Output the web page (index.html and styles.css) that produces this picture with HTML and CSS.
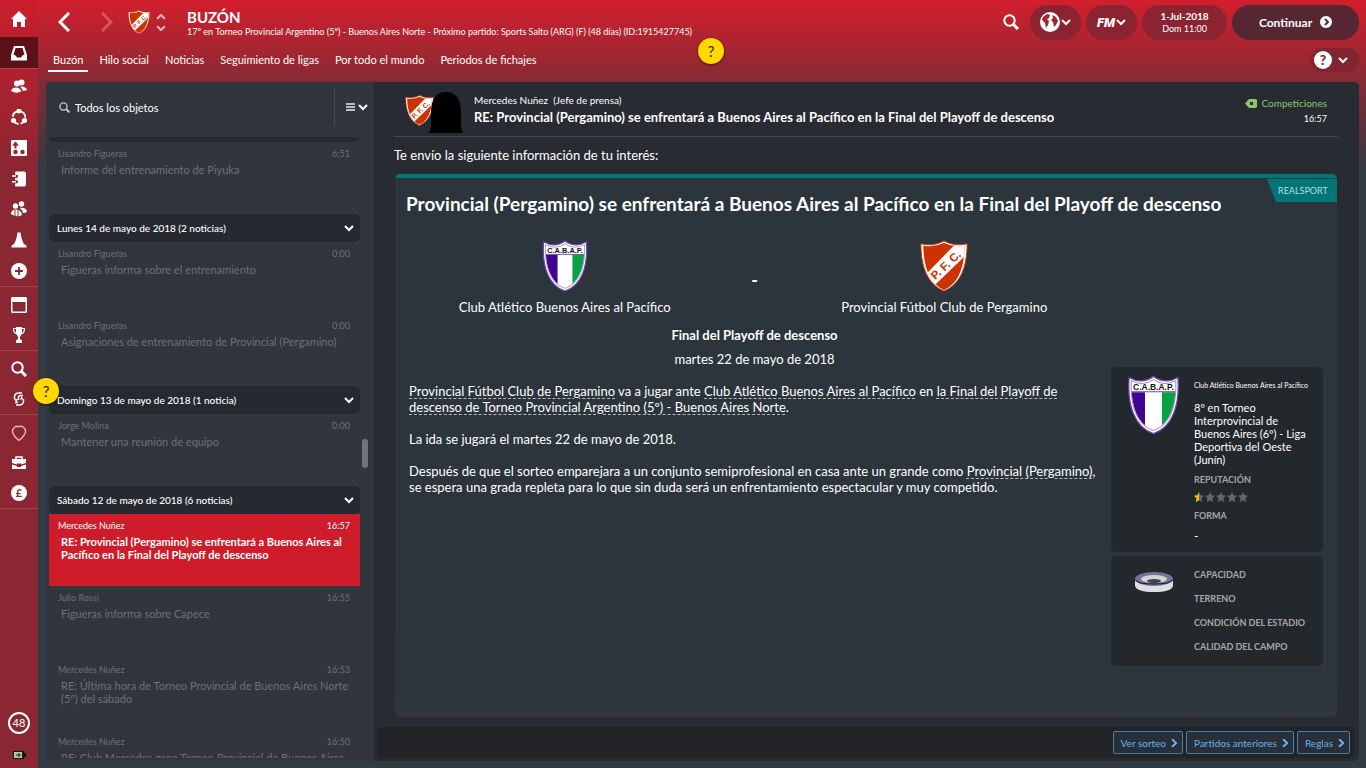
FILE: index.html
```html
<!DOCTYPE html>
<html lang="es">
  <head>
    <meta charset="UTF-8" />
    <meta name="viewport" content="width=device-width, initial-scale=1.0" />
    <title>Buzón</title>
    <link rel="stylesheet" href="styles.css">
  </head>
  <body>
    <!-- Shared crests and chevrons -->
    <svg class="defs" aria-hidden="true">
      <clipPath id="cabapClip"><path d="M4 6Q15 8 25 3Q35 8 46 6C46 29 41 45 25 52C9 45 4 29 4 6Z" /></clipPath>
      <clipPath id="pfcClip"><path d="M3.500 6Q15 8 25 3Q35 8 46.500 6C46 29 40 45 25 52C10 45 4 29 3.500 6Z" /></clipPath>
      <symbol id="cabap" viewBox="0 0 50 56">
        <path d="M2 2Q14 9 25 1Q36 9 48 2C50 28 43 49 25 55C7 49 0 28 2 2Z" fill="#fff" stroke="#6a45b5" stroke-width="1.200" />
        <g clip-path="url(#cabapClip)">
          <path d="M3 16H17V56H3Z" fill="#3f0591" />
          <path d="M33 16H48V56H33Z" fill="#06a243" />
          <path d="M3 15.500H47" stroke="#6a45b5" />
        </g>
        <path d="M4 5Q15 11 25 4Q35 11 46 5C47 28 41 47 25 52C9 47 3 28 4 5Z" fill="none" stroke="#8d70c8" stroke-width=".8" />
        <text x="25" y="14" text-anchor="middle" font-family="Liberation Sans" font-size="8" font-weight="bold" fill="#111">C.A.B.A.P.</text>
      </symbol>
      <symbol id="pfc" viewBox="0 0 50 54">
        <path d="M1 4Q14 7 25 1Q36 7 49 4C49 28 42 46 25 53C8 46 1 28 1 4Z" fill="#fff" stroke="#cf3a0c" stroke-width="1" />
        <g clip-path="url(#pfcClip)">
          <path d="M0 0H50V54H0Z" fill="#cd3301" />
          <path d="M0 42L42 -1L60 4L8 54Z" fill="#fff" />
        </g>
        <text x="27" y="30" text-anchor="middle" transform="rotate(-43 27 26)" font-family="Liberation Sans" font-size="12" font-weight="bold" fill="#cd3301">P. F. C.</text>
      </symbol>
      <symbol id="down" viewBox="0 0 10 8"><path d="M1 2L5 6L9 2" fill="none" stroke="currentColor" stroke-width="2" /></symbol>
      <symbol id="right" viewBox="0 0 6 8"><path d="M1 0L5 4L1 8" fill="none" stroke="currentColor" stroke-width="2" /></symbol>
      <symbol id="search" viewBox="0 0 16 16"><circle cx="6.500" cy="6.500" r="5.200" fill="none" stroke="currentColor" stroke-width="2" /><path d="M10 10L15 15" stroke="currentColor" stroke-width="3" /></symbol>
      <symbol id="star" viewBox="0 0 12 12"><path d="M6 0L7.800 4L12 4.500L9 7.500L9.700 12L6 9.800L2.300 12L3 7.500L0 4.500L4.200 4Z" fill="currentColor" /></symbol>
    </svg>

    <nav class="rail">
      <a class="home" href="#" aria-label="Inicio"><svg viewBox="0 0 16 16"><path d="M8 0L16 8H14V16H10V11H6V16H2V8H0Z" /></svg></a>
      <a class="active" href="#" aria-label="Buzón"><svg viewBox="0 0 16 16"><path fill-rule="evenodd" d="M3 1H13L16 10V15.500H0V10ZM4.500 3L2.500 10H4L6 12.500H10L12 10H13.500L11.500 3Z" /></svg></a>
      <div class="group first">
        <a href="#" aria-label="Plantilla"><svg viewBox="0 0 16 16"><circle cx="10.500" cy="4.500" r="3" /><circle cx="6" cy="5.500" r="3" /><path d="M0 13Q1 9.500 5 9.500Q9 9.500 10.500 13.500Q5 16 0 13ZM9 8.500Q15 8 16 12Q14 13 11.500 12.500Q11 10 9 8.500Z" /></svg></a>
        <a href="#" aria-label="Dinámica"><svg viewBox="0 0 16 16"><circle cx="8" cy="8.500" r="6.300" fill="none" stroke="#fff" stroke-width="1.800" stroke-dasharray="8 2" /><circle cx="8" cy="2" r="2.500" /><circle cx="2.500" cy="11.500" r="2.600" /><circle cx="13.500" cy="11.500" r="2.600" /></svg></a>
        <a href="#" aria-label="Tácticas"><svg viewBox="0 0 16 16"><rect width="16" height="16" rx="1" /><g fill="#96232f"><circle cx="4.500" cy="12" r="2.200" /><circle cx="11.500" cy="12" r="2.200" /><path d="M4.500 1.500L8 5.500H5.500V8.500H3.500V5.500H1Z" /></g></svg></a>
        <a href="#" aria-label="Informe del equipo"><svg viewBox="0 0 16 16"><path d="M5 .5H13Q15 .5 15 2.500V13.500Q15 15.500 13 15.500H5Q4 15.500 4 14V12.500Q7 12.500 7 10.500Q7 9 4 9V7Q7 7 7 5Q7 3.500 4 3.500V2Q4 .5 5 .5Z" /><path d="M1 5H5M1 10.800H5" stroke="#fff" stroke-width="1.500" /></svg></a>
        <a href="#" aria-label="Cuerpo técnico"><svg viewBox="0 0 16 16"><circle cx="10.500" cy="3" r="2.700" /><circle cx="4.500" cy="5" r="2.700" /><path d="M0 13Q0 8.500 5 8.500Q10 8.500 11 14Q6 17 0 13ZM8.500 7Q15 6 16 10.500Q15 12 12 12Q11 8 8.500 7Z" /><path d="M4 9V15M7 9V15" stroke="#8a2733" /></svg></a>
        <a href="#" aria-label="Entrenamiento"><svg viewBox="0 0 16 16"><path d="M6.500 .5H9.500Q10.500 8 13 12L15.500 13.500V15.500H.5V13.500L3 12Q5.500 8 6.500 .5Z" /></svg></a>
        <a href="#" aria-label="Centro médico"><svg viewBox="0 0 16 16"><circle cx="8" cy="8" r="8" /><path d="M8 4V12M4 8H12" stroke="#8a2733" stroke-width="1.800" /></svg></a>
      </div>
      <div class="group">
        <a href="#" aria-label="Calendario"><svg viewBox="0 0 16 16"><path fill-rule="evenodd" d="M1 0H15L16 1V15L15 16H1L0 15V1ZM1.500 5V14.500H14.500V5Z" /></svg></a>
        <a href="#" aria-label="Competiciones"><svg viewBox="0 0 16 16"><path d="M5 0H11V6L9 10V12L11 13.500V16H5V13.500L7 12V10L5 6Z" /><path d="M5 1.500H2.500Q2.500 6 6 7M11 1.500H13.500Q13.500 6 10 7" fill="none" stroke="#fff" stroke-width="1.200" /></svg></a>
      </div>
      <div class="group">
        <a href="#" aria-label="Ojeadores"><svg><use href="#search" /></svg></a>
        <a href="#" aria-label="Traspasos"><svg viewBox="0 0 16 16"><path d="M11 2H8Q3.500 2 3.500 6V8M5 14H8Q12.500 14 12.500 10V8" fill="none" stroke="#fff" stroke-width="1.500" /><path d="M12 4.500H9.500Q7.500 4.500 7.500 6.500V9M4 11.500H7" fill="none" stroke="#fff" stroke-width="1.500" /><path d="M9 8.500H12.500L10.500 5ZM3 8H7L5.500 11.500Z" /></svg></a>
      </div>
      <div class="group">
        <a href="#" aria-label="Club"><svg viewBox="0 0 16 16"><path d="M4.500 1.500H11.500Q15 4 14.500 7Q13.500 11 8 15.500Q2.500 11 1.500 7Q1 4 4.500 1.500Z" fill="none" stroke="#e3bdc1" stroke-width="1.300" /></svg></a>
        <a href="#" aria-label="Directiva"><svg viewBox="0 0 16 16"><path d="M5 4V2H11V4" fill="none" stroke="#fff" stroke-width="1.500" /><path d="M1 4H15V8L10 9.500V8.500H6V9.500L1 8ZM1 9.500L6 11V12H10V11L15 9.500V14H1Z" /></svg></a>
        <a href="#" aria-label="Finanzas"><svg viewBox="0 0 16 16"><circle cx="8" cy="8" r="8" /><text x="8" y="12" text-anchor="middle" font-size="11" font-weight="bold" fill="#8a2733">£</text></svg></a>
      </div>
      <div class="rail-foot">
        <span class="progress">48</span>
        <svg class="battery" viewBox="0 0 13 8"><path d="M0 0H11V2H13V6H11V8H0Z" fill="#161616" /><path d="M1 1H9V7H1Z" fill="#a9cf95" /><path d="M3 4H8M6 2V6" stroke="#222" /></svg>
      </div>
    </nav>

    <div class="page">
      <header class="top">
        <div class="top-row">
          <button class="plain back" aria-label="Atrás"><svg viewBox="0 0 12 20"><path d="M11 1L2 10L11 19" /></svg></button>
          <button class="plain forward" aria-label="Adelante"><svg viewBox="0 0 12 20"><path d="M1 1L10 10L1 19" /></svg></button>
          <svg class="club"><use href="#pfc" /></svg>
          <button class="plain updown" aria-label="Cambiar club"><svg viewBox="0 0 10 18"><path d="M1 5L5 1L9 5M1 13L5 17L9 13" /></svg></button>
          <div class="heading">
            <h1>BUZÓN</h1>
            <p>17º en Torneo Provincial Argentino (5º) - Buenos Aires Norte - Próximo partido: Sports Salto (ARG) (F) (48 días) (ID:1915427745)</p>
          </div>
          <button class="plain find" aria-label="Buscar"><svg><use href="#search" /></svg></button>
          <button class="pill" aria-label="Mundo">
            <svg class="globe" viewBox="0 0 20 20"><circle cx="10" cy="10" r="10" fill="#fff" /><path d="M3 5L7 2L10 3L9 6L7 7L9 9L8 13L6 16L5 11L2 8ZM12 3L16 5L18 9L16 13L14 15L13 10L11 8L13 6Z" fill="#9b2733" /></svg>
            <svg class="chev"><use href="#down" /></svg>
          </button>
          <button class="pill" aria-label="Menú FM"><span class="fm">FM</span><svg class="chev"><use href="#down" /></svg></button>
          <div class="pill date"><b>1-Jul-2018</b><span>Dom 11:00</span></div>
          <button class="pill continue">Continuar <svg viewBox="0 0 12 12"><circle cx="6" cy="6" r="6" fill="#fff" /><path d="M5 3L8 6L5 9" fill="none" stroke="#562732" stroke-width="2" /></svg></button>
        </div>
        <div class="tab-row">
          <nav class="tabs">
            <a class="current" href="#">Buzón</a>
            <a href="#">Hilo social</a>
            <a href="#">Noticias</a>
            <a href="#">Seguimiento de ligas</a>
            <a href="#">Por todo el mundo</a>
            <a href="#">Periodos de fichajes</a>
          </nav>
          <button class="help" aria-label="Ayuda"><span>?</span><svg class="chev"><use href="#down" /></svg></button>
        </div>
      </header>

      <main class="panels">
        <section class="inbox">
          <div class="filter">
            <svg class="filter-icon"><use href="#search" /></svg>
            <input type="text" value="Todos los objetos" aria-label="Filtrar mensajes">
            <button class="plain view" aria-label="Vista"><svg class="lines" viewBox="0 0 9 8"><path d="M0 1H9M0 4H9M0 7H9" stroke="#e6e8ea" stroke-width="1.500" /></svg><svg class="chev"><use href="#down" /></svg></button>
          </div>
          <div class="list">
            <div class="day cut"></div>
            <a class="mail" href="#"><span class="meta">Lisandro Figueras <time>6:51</time></span><span class="subject">Informe del entrenamiento de Piyuka</span></a>
            <button class="day">Lunes 14 de mayo de 2018 (2 noticias)<svg class="chev"><use href="#down" /></svg></button>
            <a class="mail" href="#"><span class="meta">Lisandro Figueras <time>0:00</time></span><span class="subject">Figueras informa sobre el entrenamiento</span></a>
            <a class="mail" href="#"><span class="meta">Lisandro Figueras <time>0:00</time></span><span class="subject">Asignaciones de entrenamiento de Provincial (Pergamino)</span></a>
            <button class="day">Domingo 13 de mayo de 2018 (1 noticia)<svg class="chev"><use href="#down" /></svg></button>
            <a class="mail" href="#"><span class="meta">Jorge Molina <time>0:00</time></span><span class="subject">Mantener una reunión de equipo</span></a>
            <button class="day">Sábado 12 de mayo de 2018 (6 noticias)<svg class="chev"><use href="#down" /></svg></button>
            <a class="mail selected" href="#"><span class="meta">Mercedes Nuñez <time>16:57</time></span><span class="subject">RE: Provincial (Pergamino) se enfrentará a Buenos Aires al Pacífico en la Final del Playoff de descenso</span></a>
            <a class="mail" href="#"><span class="meta">Julio Rossi <time>16:55</time></span><span class="subject">Figueras informa sobre Capece</span></a>
            <a class="mail" href="#"><span class="meta">Mercedes Nuñez <time>16:53</time></span><span class="subject">RE: Última hora de Torneo Provincial de Buenos Aires Norte (5º) del sábado</span></a>
            <a class="mail" href="#"><span class="meta">Mercedes Nuñez <time>16:50</time></span><span class="subject">RE: Club Mercedes gana Torneo Provincial de Buenos Aires</span></a>
          </div>
          <div class="scrollbar"></div>
        </section>

        <section class="message">
          <div class="sender">
            <svg class="avatar" viewBox="0 0 58 42">
              <use href="#pfc" x="0" y="4" width="29" height="31" />
              <path d="M24 42L26 36V22Q26 1 41 1Q56 1 56 22V36L58 42Z" fill="#000" />
            </svg>
            <div class="who">
              <p>Mercedes Nuñez&nbsp; (Jefe de prensa)</p>
              <h2>RE: Provincial (Pergamino) se enfrentará a Buenos Aires al Pacífico en la Final del Playoff de descenso</h2>
            </div>
            <div class="tag">
              <span><svg viewBox="0 0 12 9"><path fill-rule="evenodd" d="M4 0H11L12 1V8L11 9H4L0 4.500ZM5 3V6H8V3Z" fill="#8cc56b" /></svg>Competiciones</span>
              <time>16:57</time>
            </div>
          </div>
          <p class="intro">Te envío la siguiente información de tu interés:</p>

          <article class="card">
            <span class="ribbon">REALSPORT</span>
            <h3>Provincial (Pergamino) se enfrentará a Buenos Aires al Pacífico en la Final del Playoff de descenso</h3>
            <div class="card-body">
              <div class="story">
                <div class="match">
                  <div><svg><use href="#cabap" /></svg><span>Club Atlético Buenos Aires al Pacífico</span></div>
                  <b>-</b>
                  <div><svg><use href="#pfc" /></svg><span>Provincial Fútbol Club de Pergamino</span></div>
                </div>
                <p class="round">Final del Playoff de descenso</p>
                <p class="when">martes 22 de mayo de 2018</p>
                <div class="text">
                  <p><a href="#">Provincial Fútbol Club de Pergamino</a> va a jugar ante <a href="#">Club Atlético Buenos Aires al Pacífico</a> en <a href="#">la Final del Playoff de descenso de Torneo Provincial Argentino (5º) - Buenos Aires Norte</a>.</p>
                  <p>La ida se jugará el martes 22 de mayo de 2018.</p>
                  <p>Después de que el sorteo emparejara a un conjunto semiprofesional en casa ante un grande como <a href="#">Provincial (Pergamino)</a>, se espera una grada repleta para lo que sin duda será un enfrentamiento espectacular y muy competido.</p>
                </div>
              </div>
              <aside class="side">
                <div class="box">
                  <svg class="box-crest"><use href="#cabap" /></svg>
                  <div>
                    <p class="club-name">Club Atlético Buenos Aires al Pacífico</p>
                    <p class="place">8º en Torneo Interprovincial de Buenos Aires (6º) - Liga Deportiva del Oeste (Junín)</p>
                    <h4>REPUTACIÓN</h4>
                    <div class="stars" role="img" aria-label="Media estrella de cinco">
                      <svg viewBox="0 0 12 12"><use href="#star" /><path d="M6 0V9.800L2.300 12L3 7.500L0 4.500L4.200 4Z" fill="#f7b90e" /></svg>
                      <svg><use href="#star" /></svg><svg><use href="#star" /></svg><svg><use href="#star" /></svg><svg><use href="#star" /></svg>
                    </div>
                    <h4>FORMA</h4>
                    <p class="form">-</p>
                  </div>
                </div>
                <div class="box ground">
                  <svg class="stadium" viewBox="0 0 38 22"><ellipse cx="19" cy="12" rx="19" ry="9" fill="#74749a" /><path d="M0 10Q19 18 38 10V15Q36 21 19 21Q2 21 0 15Z" fill="#dedee2" /><ellipse cx="19" cy="8" rx="19" ry="7" fill="#74749a" /><ellipse cx="19" cy="8" rx="13" ry="4" fill="#d3d3d8" /><ellipse cx="19" cy="10" rx="7" ry="2" fill="#3c474c" /><path d="M1 9Q2 13 19 13Q36 13 37 9" fill="none" stroke="#17171c" /></svg>
                  <div>
                    <h4>CAPACIDAD</h4>
                    <h4>TERRENO</h4>
                    <h4>CONDICIÓN DEL ESTADIO</h4>
                    <h4>CALIDAD DEL CAMPO</h4>
                  </div>
                </div>
              </aside>
            </div>
          </article>

          <footer class="actions">
            <button>Ver sorteo <svg><use href="#right" /></svg></button>
            <button>Partidos anteriores <svg><use href="#right" /></svg></button>
            <button>Reglas <svg><use href="#right" /></svg></button>
          </footer>
        </section>
      </main>
    </div>

    <button class="tip tip-header" aria-label="Consejo">?</button>
    <button class="tip tip-list" aria-label="Consejo">?</button>
  </body>
</html>
```
FILE: styles.css
```css
* {
  box-sizing: border-box;
}

body {
  margin: 0;
  height: 100vh;
  display: flex;
  position: relative;
  overflow: hidden;
  font-family: "Lato", "Roboto", sans-serif;
  font-size: 12px;
  color: #fff;
  background: linear-gradient(#d21e2d 0, #a92530 46px, #842b35 82px, #323a42 170px);
}

h1, h2, h3, h4, p {
  margin: 0;
}

a {
  color: inherit;
  text-decoration: none;
}

button {
  font: inherit;
  color: inherit;
  border: 0;
  padding: 0;
  cursor: pointer;
}

svg {
  display: block;
  flex: none;
}

.defs {
  position: absolute;
  width: 0;
  height: 0;
}

.plain {
  background: none;
}

.chev {
  width: 10px;
  height: 8px;
}

/* Left icon rail */
.rail {
  width: 38px;
  flex: none;
  display: flex;
  flex-direction: column;
  background: linear-gradient(#cb1d2c 0, #8a2733 170px);
}

.rail a {
  height: 30px;
  display: flex;
  align-items: center;
  justify-content: center;
}

.rail svg {
  width: 16px;
  height: 16px;
  fill: #fff;
}

.rail .home {
  height: 37px;
}

.rail .active {
  height: 31px;
  background: #5c1119;
}

.group {
  padding-top: 3px;
  border-bottom: 1px solid #a04650;
}

.first {
  height: 219px;
  display: flex;
  flex-direction: column;
  padding-top: 2px;
  border-top: 1px solid #b04650;
}

.first a {
  flex: 1;
}

.rail-foot {
  margin-top: auto;
  padding-bottom: 9px;
  display: flex;
  flex-direction: column;
  align-items: center;
  gap: 17px;
}

.progress {
  width: 22px;
  height: 22px;
  border: 2px solid #fff;
  border-radius: 50%;
  font-size: 11px;
  line-height: 18px;
  text-align: center;
}

.rail .battery {
  width: 13px;
  height: 8px;
}

/* Header */
.page {
  flex: 1;
  min-width: 0;
  display: flex;
  flex-direction: column;
  padding: 0 7px 7px 8px;
}

.top-row {
  height: 46px;
  display: flex;
  align-items: center;
  gap: 5px;
  padding-bottom: 2px;
}

.back,
.forward {
  width: 38px;
  padding-left: 12px;
}

.forward {
  width: 34px;
}

.back svg,
.forward svg {
  width: 12px;
  height: 20px;
  fill: none;
  stroke: #fff;
  stroke-width: 3;
}

.forward svg {
  stroke: #d6565f;
}

.club {
  width: 22px;
  height: 24px;
}

.updown {
  padding: 0 16px 0 1px;
}

.updown svg {
  width: 10px;
  height: 17px;
  fill: none;
  stroke: #eec4c8;
  stroke-width: 2;
}

.heading {
  flex: 1;
  min-width: 0;
  white-space: nowrap;
}

.heading h1 {
  font-size: 15px;
  line-height: 18px;
}

.heading p {
  font-size: 9px;
  line-height: 11px;
}

.find {
  margin-right: 6px;
}

.find svg {
  width: 16px;
  height: 16px;
}

.pill {
  height: 35px;
  min-width: 51px;
  display: flex;
  align-items: center;
  justify-content: center;
  gap: 1px;
  border-radius: 18px;
  background: #8b2430;
}

.globe {
  width: 20px;
  height: 20px;
}

.fm {
  font-family: "Roboto", sans-serif;
  font-size: 13px;
  font-weight: 900;
  font-style: italic;
}

.date {
  width: 85px;
  flex-direction: column;
  font-size: 10px;
  line-height: 12px;
}

.date span {
  font-size: 9px;
}

.continue {
  width: 127px;
  gap: 8px;
  font-weight: bold;
  background: #562732;
}

.continue svg {
  width: 12px;
  height: 12px;
}

.tab-row {
  height: 36px;
  display: flex;
  justify-content: space-between;
  align-items: flex-start;
}

.tabs {
  display: flex;
  gap: 6px;
  padding-left: 2px;
  font-size: 11px;
}

.tabs a {
  padding: 6px 5px 2px;
  line-height: 16px;
  border-bottom: 2px solid transparent;
}

.tabs .current {
  border-color: #fff;
}

.help {
  height: 24px;
  margin-top: 2px;
  padding: 0 11px 0 4px;
  display: flex;
  align-items: center;
  gap: 6px;
  border-radius: 12px;
  background: #812630;
}

.help span {
  width: 18px;
  border-radius: 50%;
  background: #fff;
  color: #812630;
  font-size: 14px;
  font-weight: 900;
  line-height: 18px;
}

/* Message list */
.panels {
  flex: 1;
  min-height: 0;
  display: flex;
  border-radius: 5px;
  overflow: hidden;
  background: #282b32;
}

.inbox {
  width: 328px;
  flex: none;
  position: relative;
  display: flex;
  flex-direction: column;
  padding: 0 14px 3px 3px;
  background: #31353c;
}

.filter {
  height: 55px;
  flex: none;
  display: flex;
  align-items: center;
  padding: 0 0 5px 10px;
}

.filter-icon {
  width: 11px;
  height: 11px;
  color: #c3c6ca;
}

.filter input {
  flex: 1;
  min-width: 0;
  margin: 0;
  padding: 0 5px;
  border: 0;
  background: none;
  color: #fff;
  font: inherit;
  font-size: 11px;
}

.view {
  height: 38px;
  margin-right: -8px;
  padding-left: 11px;
  display: flex;
  align-items: center;
  gap: 3px;
  border-left: 1px solid #484c52;
}

.lines {
  width: 9px;
  height: 8px;
}

.list {
  flex: 1;
  min-height: 0;
  overflow: hidden;
}

.day {
  width: 100%;
  height: 28px;
  padding: 0 6px 0 8px;
  display: flex;
  align-items: center;
  justify-content: space-between;
  border-radius: 5px;
  background: #262930;
  font-size: 10px;
  font-weight: 500;
}

.day.cut {
  height: 5px;
  border-radius: 0 0 5px 5px;
}

.mail {
  height: 72px;
  display: block;
  padding: 5px 10px 0 9px;
  color: #6e7175;
}

.meta {
  display: flex;
  justify-content: space-between;
  font-size: 9px;
  line-height: 14px;
}

.subject {
  display: block;
  padding: 2px 0 0 3px;
  font-size: 11px;
  line-height: 13px;
}

.selected {
  background: #ce1c2b;
  color: #fff;
}

.selected .subject {
  font-weight: bold;
}

.scrollbar {
  position: absolute;
  right: 6px;
  top: 357px;
  width: 6px;
  height: 29px;
  border-radius: 3px;
  background: #71747a;
}

/* Open message */
.message {
  flex: 1;
  min-width: 0;
  display: flex;
  flex-direction: column;
  padding: 0 4px 3px 3px;
}

.sender {
  height: 55px;
  flex: none;
  display: flex;
  margin: 0 17px;
  padding: 9px 11px 0;
  border-bottom: 1px solid #43464a;
}

.avatar {
  width: 58px;
  height: 42px;
}

.who {
  flex: 1;
  padding: 2px 0 0 11px;
}

.who p {
  font-size: 10px;
  line-height: 15px;
}

.who h2 {
  font-size: 13px;
  line-height: 19px;
}

.tag {
  display: flex;
  flex-direction: column;
  align-items: flex-end;
  padding-top: 5px;
  font-size: 10px;
  line-height: 15px;
}

.tag span {
  display: flex;
  align-items: center;
  gap: 4px;
  color: #8cc56b;
}

.tag svg {
  width: 12px;
  height: 9px;
}

.tag time {
  font-size: 9px;
}

.intro {
  padding: 10px 17px;
  font-size: 13px;
  line-height: 17px;
}

.card {
  flex: 1;
  min-height: 0;
  position: relative;
  margin: 0 18px 10px;
  padding: 17px 14px 0;
  border-top: 4px solid #027677;
  border-radius: 5px;
  background: linear-gradient(#2b353b 80%, #2f363c);
}

.ribbon {
  position: absolute;
  top: 1px;
  right: 0;
  width: 70px;
  padding-left: 11px;
  background: #027677;
  clip-path: polygon(0 0, 100% 0, 100% 100%, 9px 100%);
  color: #b3dcd9;
  font-size: 9px;
  line-height: 23px;
}

.card h3 {
  margin-left: -3px;
  font-size: 19px;
  line-height: 18px;
}

.card-body {
  display: flex;
  gap: 11px;
  padding-top: 27px;
}

.story {
  flex: 1;
  font-size: 13px;
  line-height: 16px;
}

.match {
  display: grid;
  grid-template-columns: 1fr 68px 1fr;
  align-items: center;
  text-align: center;
}

.match div {
  display: flex;
  flex-direction: column;
  align-items: center;
  gap: 7px;
}

.match svg {
  width: 50px;
  height: 52px;
}

.match b {
  padding-top: 4px;
  font-size: 18px;
}

.round,
.when {
  padding-top: 12px;
  text-align: center;
}

.round {
  font-weight: bold;
}

.when {
  padding-top: 8px;
}

.text p {
  padding-top: 16px;
}

.text a {
  text-decoration: underline dashed 1px #b5babd;
  text-underline-offset: 2px;
}

.side {
  width: 212px;
  padding-top: 127px;
  display: flex;
  flex-direction: column;
  gap: 4px;
}

.box {
  display: flex;
  gap: 14px;
  padding: 8px 16px 9px;
  border-radius: 5px;
  background: #23282d;
}

.box-crest {
  width: 53px;
  height: 60px;
}

.box div {
  min-width: 0;
}

.club-name {
  font-size: 7px;
  line-height: 20px;
  white-space: nowrap;
}

.place {
  padding: 6px 0 7px;
  font-size: 11px;
  line-height: 13px;
}

.box h4 {
  color: #a4a8a7;
  font-size: 9px;
  line-height: 13px;
}

.stars {
  display: flex;
  gap: 1px;
  padding: 6px 0 7px;
  color: #63686d;
}

.stars svg {
  width: 10px;
  height: 10px;
}

.form {
  padding: 7px 0 1px;
  line-height: 13px;
}

.ground {
  padding: 12px 16px 13px 24px;
  gap: 21px;
}

.stadium {
  width: 38px;
  height: 22px;
  margin-top: 3px;
}

.ground div {
  display: grid;
  gap: 11px;
}

.actions {
  height: 31px;
  display: flex;
  align-items: center;
  justify-content: flex-end;
  gap: 3px;
  padding: 0 5px;
  border-radius: 5px;
  background: #212327;
}

.actions button {
  height: 23px;
  display: flex;
  align-items: center;
  gap: 5px;
  padding: 0 5px 0 7px;
  border: 1px solid #4a7ba3;
  border-radius: 2px;
  background: #27303a;
  color: #6cb0e4;
  font-size: 10px;
}

.actions svg {
  width: 6px;
  height: 8px;
}

/* Yellow hint markers float over the page */
.tip {
  position: absolute;
  width: 26px;
  height: 26px;
  border-radius: 50%;
  background: #ffd800;
  color: #222;
  font-size: 15px;
  box-shadow: 0 1px 3px rgba(0, 0, 0, 0.5);
}

.tip-header {
  left: 698px;
  top: 38px;
}

.tip-list {
  left: 33px;
  top: 378px;
}
```
